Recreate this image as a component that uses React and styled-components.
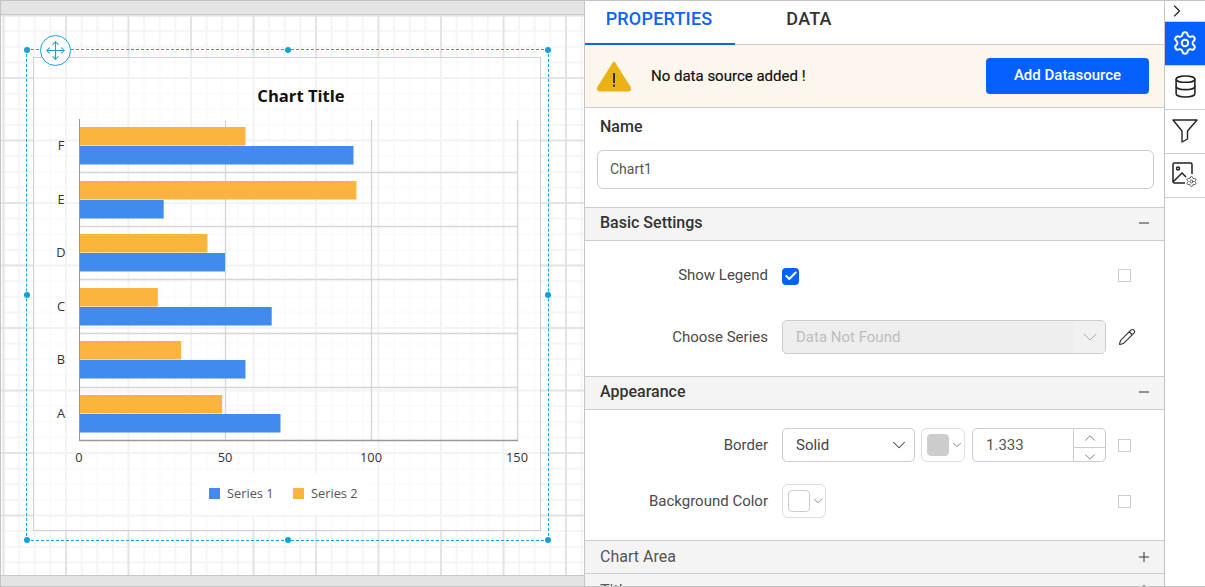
import React from "react";
import styled, { createGlobalStyle } from "styled-components";
import { ChevronDown, ChevronRight, ChevronUp, Check, Database, Minus, Move, Pencil, Plus, Settings } from "lucide-react";

const rows = [
  { label: "F", y: 127, orange: 57, blue: 94 },
  { label: "E", y: 181, orange: 95, blue: 29 },
  { label: "D", y: 234, orange: 44, blue: 50 },
  { label: "C", y: 288, orange: 27, blue: 66 },
  { label: "B", y: 341, orange: 35, blue: 57 },
  { label: "A", y: 395, orange: 49, blue: 69 }
];

const handles = [
  [0, 0], [50, 0], [100, 0],
  [0, 50], [100, 50],
  [0, 100], [50, 100], [100, 100]
];

const scale = v => 79 + v * 2.92;

const BarChart = () => (
  <svg width="506" height="472" viewBox="34 58 506 472" style={{ display: "block" }}>
    <text x="301" y="102" textAnchor="middle" fontFamily="Open Sans, sans-serif" fontWeight="700" fontSize="16.6" fill="#111">Chart Title</text>
    {[172, 226, 279, 333, 387].map(y => (
      <line key={y} x1="79" x2="517" y1={y + 0.5} y2={y + 0.5} stroke="#d6d6d6" strokeWidth="1.3" />
    ))}
    {[225, 371, 517].map(x => (
      <line key={x} x1={x + 0.5} x2={x + 0.5} y1="120" y2="440" stroke="#d6d6d6" strokeWidth="1.3" />
    ))}
    {rows.map(r => (
      <g key={r.label}>
        <rect x="79" y={r.y} width={scale(r.orange) - 79} height="18.5" fill="#fdb43f" />
        <rect x="79" y={r.y + 19} width={scale(r.blue) - 79} height="18.5" fill="#418bee" />
        <text x="61" y={r.y + 23} textAnchor="middle" fontFamily="Open Sans, sans-serif" fontSize="12.8" fill="#333">{r.label}</text>
      </g>
    ))}
    <line x1="79.5" x2="79.5" y1="119" y2="440" stroke="#999" />
    <line x1="79" x2="518" y1="440.5" y2="440.5" stroke="#999" strokeWidth="1.6" />
    {[0, 50, 100, 150].map(v => (
      <text key={v} x={scale(v)} y="462" textAnchor="middle" fontFamily="Open Sans, sans-serif" fontSize="12.8" fill="#333">{v}</text>
    ))}
    <rect x="197" y="473" width="173" height="42" fill="#fff" />
    <rect x="209" y="488" width="11" height="11" fill="#418bee" />
    <text x="227" y="498" fontFamily="Open Sans, sans-serif" fontSize="12.8" fill="#555">Series 1</text>
    <rect x="293" y="488" width="11" height="11" fill="#fdb43f" />
    <text x="311" y="498" fontFamily="Open Sans, sans-serif" fontSize="12.8" fill="#555">Series 2</text>
  </svg>
);

const WarningIcon = () => (
  <svg width="36" height="32" viewBox="0 0 36 32">
    <path d="M18 2.5 L33.8 27.5 Q35 30.5 32 30.5 H4 Q1 30.5 2.2 27.5 Z" fill="#ebb215" stroke="#ebb215" strokeWidth="2" strokeLinejoin="round" />
    <rect x="17" y="13" width="2" height="10" fill="#333" />
    <rect x="17" y="24.5" width="2" height="2.2" fill="#333" />
  </svg>
);

const FunnelIcon = () => (
  <svg width="26" height="24" viewBox="0 0 26 24" fill="none" stroke="#222" strokeWidth="1.4" strokeLinejoin="round">
    <path d="M1 1 H25 L15.5 12 V20 L10 23 V12 Z" />
  </svg>
);

const ImageGearIcon = () => (
  <svg width="26" height="26" viewBox="0 0 26 26" fill="none" stroke="#222" strokeWidth="1.5">
    <path d="M13 21 H2.5 Q1 21 1 19.5 V2.5 Q1 1 2.5 1 H18.5 Q20 1 20 2.5 V12" />
    <circle cx="6" cy="6.5" r="1.5" />
    <path d="M1 20 L10 11 L14 15" />
    <Settings x="13.5" y="13.5" width="12" height="12" strokeWidth="1.6" color="#333" />
  </svg>
);

export default function App() {
  return (
    <Page>
      <GlobalStyle />
      <Canvas>
        <CanvasBar />
        <Surface>
          <SelectionFrame>
            <MoveHandle>
              <Move size={21} strokeWidth={1.2} />
            </MoveHandle>
            {handles.map(([x, y]) => (
              <Handle key={`${x}-${y}`} $x={x} $y={y} />
            ))}
            <ChartBox>
              <BarChart />
            </ChartBox>
          </SelectionFrame>
        </Surface>
        <CanvasBar $bottom />
      </Canvas>

      <Panel>
        <Tabs>
          <Tab $active>PROPERTIES</Tab>
          <Tab>DATA</Tab>
        </Tabs>
        <Notice>
          <WarningIcon />
          <NoticeText>No data source added !</NoticeText>
          <PrimaryButton>Add Datasource</PrimaryButton>
        </Notice>
        <NameBlock>
          <NameLabel>Name</NameLabel>
          <TextInput>Chart1</TextInput>
        </NameBlock>

        <SectionHeader>
          Basic Settings
          <Minus size={16} strokeWidth={1.5} />
        </SectionHeader>
        <SectionBody $top={17} $gap={28} $bottom={22}>
          <Row>
            <RowLabel>Show Legend</RowLabel>
            <Control>
              <Checkbox>
                <Check size={14} strokeWidth={3.5} color="#fff" />
              </Checkbox>
            </Control>
            <Square />
          </Row>
          <Row>
            <RowLabel>Choose Series</RowLabel>
            <Control>
              <DisabledSelect>
                <span>Data Not Found</span>
                <DisabledArrow>
                  <ChevronDown size={24} strokeWidth={1} color="#aaa" />
                </DisabledArrow>
              </DisabledSelect>
            </Control>
            <Pencil size={18} strokeWidth={1.5} color="#333" />
          </Row>
        </SectionBody>

        <SectionHeader>
          Appearance
          <Minus size={16} strokeWidth={1.5} />
        </SectionHeader>
        <SectionBody $top={18} $gap={22} $bottom={22}>
          <Row>
            <RowLabel>Border</RowLabel>
            <Control>
              <Select>
                Solid
                <ChevronDown size={22} strokeWidth={1.1} color="#444" />
              </Select>
              <ColorPicker $color="#cccccc">
                <span />
                <ChevronDown size={14} strokeWidth={1.2} color="#555" />
              </ColorPicker>
              <NumberInput>
                <NumberValue>1.333</NumberValue>
                <Spinner>
                  <SpinButton><ChevronUp size={18} strokeWidth={1} color="#555" /></SpinButton>
                  <SpinButton><ChevronDown size={18} strokeWidth={1} color="#555" /></SpinButton>
                </Spinner>
              </NumberInput>
            </Control>
            <Square />
          </Row>
          <Row>
            <RowLabel>Background Color</RowLabel>
            <Control>
              <ColorPicker $color="#ffffff" $outlined>
                <span />
                <ChevronDown size={14} strokeWidth={1.2} color="#555" />
              </ColorPicker>
            </Control>
            <Square />
          </Row>
        </SectionBody>

        <SectionHeader $plain>
          Chart Area
          <Plus size={16} strokeWidth={1.5} />
        </SectionHeader>
        <SectionHeader $plain>
          Title
          <Plus size={16} strokeWidth={1.5} />
        </SectionHeader>
      </Panel>

      <Rail>
        <CollapseCell>
          <ChevronRight size={20} strokeWidth={1.4} />
        </CollapseCell>
        <RailCell $active>
          <Settings size={26} strokeWidth={1.8} />
        </RailCell>
        <RailCell>
          <Database size={25} strokeWidth={1.5} />
        </RailCell>
        <RailCell>
          <FunnelIcon />
        </RailCell>
        <RailCell>
          <ImageGearIcon />
        </RailCell>
      </Rail>
    </Page>
  );
}

const GlobalStyle = createGlobalStyle`
  html, body {
    margin: 0;
    padding: 0;
    background: #fff;
    font-family: Roboto, "Liberation Sans", sans-serif;
  }
`;

const Page = styled.div`
  display: flex;
  width: 1205px;
  height: 587px;
  box-sizing: border-box;
  border-top: 1px solid #c4c4c4;
  border-bottom: 1px solid #c4c4c4;
  overflow: hidden;
`;

const Canvas = styled.div`
  display: flex;
  flex-direction: column;
  flex: 0 0 585px;
  box-sizing: border-box;
  border-left: 1px solid #c4c4c4;
  border-right: 1px solid #c4c4c4;
`;

const CanvasBar = styled.div`
  flex: 0 0 ${p => (p.$bottom ? 11 : 14)}px;
  background: #e4e4e4;
  box-sizing: border-box;
  ${p => (p.$bottom ? "border-top" : "border-bottom")}: 1px solid #c8c8c8;
`;

const Surface = styled.div`
  flex: 1;
  box-sizing: border-box;
  padding: 34px 0 0 25px;
  background-color: #fff;
  background-image:
    linear-gradient(90deg, #e4e4e4 2px, transparent 2px),
    linear-gradient(0deg, #e4e4e4 2px, transparent 2px),
    linear-gradient(90deg, #f5f5f5 2px, transparent 2px),
    linear-gradient(0deg, #f5f5f5 2px, transparent 2px);
  background-size: 62.5px 62.5px, 62.5px 62.5px, 15.625px 15.625px, 15.625px 15.625px;
  background-position: 1.5px 0, 0 1.5px, 1.5px 0, 0 1.5px;
`;

const SelectionFrame = styled.div`
  position: relative;
  width: 523px;
  height: 492px;
  box-sizing: border-box;
  border: 1px dashed #12a3e6;
  padding: 7px 6px;
`;

const Handle = styled.span`
  position: absolute;
  left: ${p => p.$x}%;
  top: ${p => p.$y}%;
  width: 6px;
  height: 6px;
  margin: -3px 0 0 -3px;
  border-radius: 50%;
  background: #129fdd;
  z-index: 2;
`;

const MoveHandle = styled.div`
  position: absolute;
  left: 13px;
  top: -15px;
  width: 29px;
  height: 29px;
  display: flex;
  align-items: center;
  justify-content: center;
  border: 1px solid #1a9fdc;
  border-radius: 50%;
  background: #fff;
  color: #1a9fdc;
  z-index: 2;
`;

const ChartBox = styled.div`
  width: 508px;
  height: 474px;
  box-sizing: border-box;
  border: 1px solid #cfcfcf;
  background: rgba(255, 255, 255, 0.55);
`;

const Panel = styled.div`
  flex: 0 0 579px;
  min-width: 0;
  overflow: hidden;
  color: #333;
`;

const Tabs = styled.div`
  display: flex;
  height: 44px;
  box-sizing: border-box;
  border-bottom: 1px solid #ccc;
`;

const Tab = styled.div`
  width: 150px;
  height: 44px;
  box-sizing: border-box;
  padding: 7px 2px 0 0;
  text-align: center;
  font-size: 18px;
  letter-spacing: 0.2px;
  line-height: 22px;
  font-weight: 500;
  color: ${p => (p.$active ? "#0a65f5" : "#333")};
  border-bottom: 2px solid ${p => (p.$active ? "#0a65f5" : "transparent")};
`;

const Notice = styled.div`
  display: flex;
  align-items: center;
  height: 63px;
  box-sizing: border-box;
  padding: 0 15px 0 11px;
  background: #fdf6ec;
  border-bottom: 1px solid #ccc;
`;

const NoticeText = styled.div`
  flex: 1;
  margin-left: 19px;
  font-size: 15px;
  color: #111;
  -webkit-text-stroke: 0.2px #111;
`;

const PrimaryButton = styled.div`
  display: flex;
  align-items: center;
  justify-content: center;
  width: 163px;
  height: 36px;
  box-sizing: border-box;
  padding-bottom: 2px;
  border-radius: 4px;
  background: #0560fd;
  color: #fff;
  font-size: 15px;
  font-weight: 500;
`;

const NameBlock = styled.div`
  padding: 8px 10px 18px 12px;
`;

const NameLabel = styled.div`
  margin: 0 0 12px 3px;
  font-size: 16px;
  line-height: 22px;
  font-weight: 500;
`;

const TextInput = styled.div`
  display: flex;
  align-items: center;
  height: 39px;
  box-sizing: border-box;
  padding: 0 0 2px 12px;
  border: 1px solid #ccc;
  border-radius: 6px;
  font-size: 14px;
  color: #555;
`;

const SectionHeader = styled.div`
  display: flex;
  align-items: center;
  justify-content: space-between;
  height: 34px;
  flex-shrink: 0;
  box-sizing: border-box;
  padding: 0 12px ${p => (p.$plain ? 1 : 3)}px 15px;
  background: #f4f4f4;
  border-top: 1px solid #ccc;
  border-bottom: 1px solid #ccc;
  font-size: 16px;
  font-weight: ${p => (p.$plain ? 400 : 500)};
  color: ${p => (p.$plain ? "#555" : "#333")};
  > svg {
    color: #333;
  }
  & + & {
    border-top: none;
  }
`;

const SectionBody = styled.div`
  display: flex;
  flex-direction: column;
  gap: ${p => p.$gap}px;
  padding: ${p => p.$top}px 0 ${p => p.$bottom}px;
`;

const Row = styled.div`
  display: flex;
  align-items: center;
  height: 34px;
`;

const RowLabel = styled.div`
  width: 183px;
  text-align: right;
  font-size: 15px;
  color: #4a4a4a;
`;

const Control = styled.div`
  display: flex;
  align-items: center;
  gap: 6px;
  width: 324px;
  margin: 0 12px 0 14px;
`;

const Checkbox = styled.div`
  display: flex;
  align-items: center;
  justify-content: center;
  width: 17px;
  height: 17px;
  margin-top: 2px;
  border-radius: 4px;
  background: #0560fd;
`;

const Square = styled.div`
  width: 13px;
  height: 13px;
  box-sizing: border-box;
  border: 1px solid #ccc;
`;

const DisabledSelect = styled.div`
  display: flex;
  align-items: center;
  justify-content: space-between;
  width: 324px;
  height: 34px;
  box-sizing: border-box;
  padding-left: 13px;
  border: 1px solid #ccc;
  border-radius: 5px;
  background: #eeeeee;
  font-size: 15px;
  color: #bdbdbd;
  overflow: hidden;
`;

const DisabledArrow = styled.div`
  display: flex;
  align-items: center;
  justify-content: center;
  width: 30px;
  height: 100%;
  background: #f1f1f1;
`;

const Select = styled.div`
  display: flex;
  align-items: center;
  justify-content: space-between;
  width: 133px;
  height: 34px;
  box-sizing: border-box;
  padding: 0 4px 0 13px;
  border: 1px solid #ccc;
  border-radius: 5px;
  font-size: 15px;
  color: #444;
`;

const ColorPicker = styled.div`
  display: flex;
  align-items: center;
  gap: 1px;
  width: 44px;
  height: 34px;
  box-sizing: border-box;
  padding-left: 5px;
  border: 1px solid #ddd;
  border-radius: 6px;
  > span {
    width: 22px;
    height: 22px;
    box-sizing: border-box;
    border-radius: 4px;
    background: ${p => p.$color};
    border: 1px solid ${p => (p.$outlined ? "#ccc" : p.$color)};
  }
`;

const NumberInput = styled.div`
  display: flex;
  align-items: stretch;
  width: 134px;
  height: 34px;
  margin-left: 1px;
  box-sizing: border-box;
  border: 1px solid #ccc;
  border-radius: 5px;
`;

const NumberValue = styled.div`
  flex: 1;
  padding-left: 13px;
  line-height: 32px;
  font-size: 15px;
  color: #555;
`;

const Spinner = styled.div`
  display: flex;
  flex-direction: column;
  width: 31px;
  border-left: 1px solid #ccc;
`;

const SpinButton = styled.div`
  display: flex;
  flex: 1;
  align-items: center;
  justify-content: center;
  &:first-child {
    border-bottom: 1px solid #ccc;
  }
`;

const Rail = styled.div`
  flex: 1;
  box-sizing: border-box;
  border-left: 1px solid #c4c4c4;
  color: #222;
`;

const CollapseCell = styled.div`
  display: flex;
  align-items: center;
  padding-left: 2px;
  height: 21px;
  box-sizing: border-box;
  border-bottom: 1px solid #ccc;
`;

const RailCell = styled.div`
  display: flex;
  align-items: center;
  justify-content: center;
  height: 44px;
  box-sizing: border-box;
  padding-bottom: 2px;
  border-bottom: 1px solid #ccc;
  background: ${p => (p.$active ? "#0560fd" : "transparent")};
  color: ${p => (p.$active ? "#fff" : "#222")};
`;
